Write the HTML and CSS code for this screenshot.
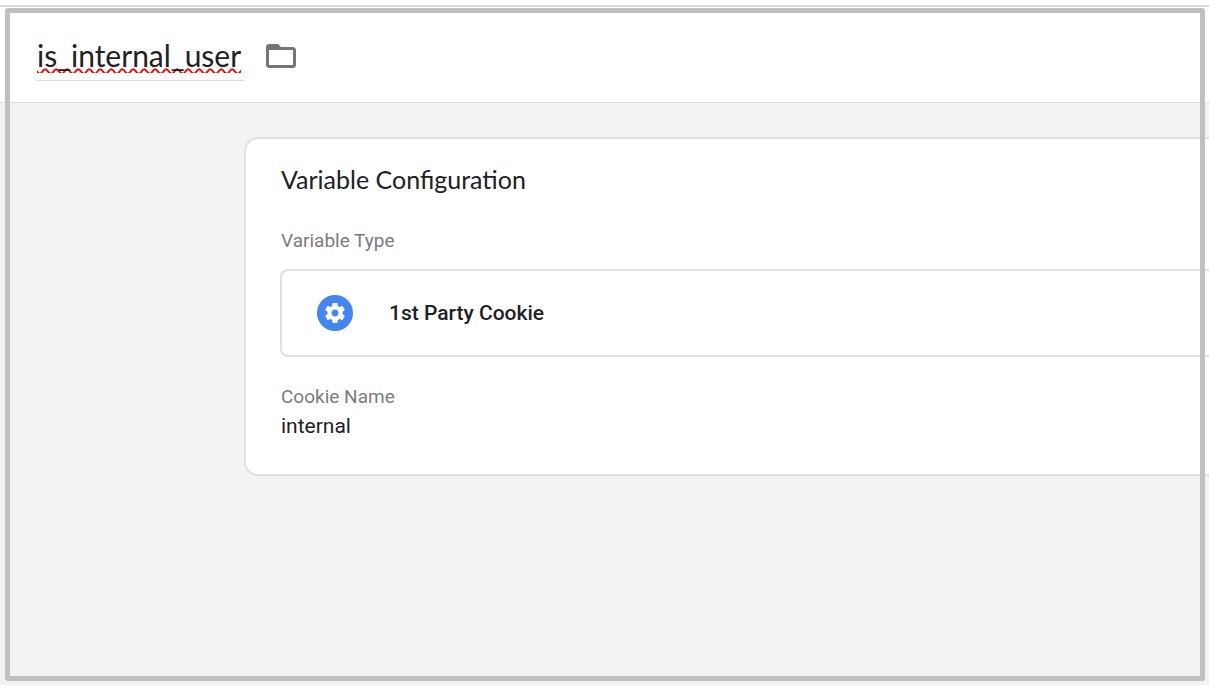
FILE: index.html
```html
<!doctype html>
<html lang="en">
    <head>
        <meta charset="utf-8">
        <title>is_internal_user</title>
        <link rel="stylesheet" href="styles.css">
    </head>
    <body>
        <header class="header">
            <input class="name" type="text" value="is_internal_user" aria-label="Variable name" spellcheck="false">
            <button class="folder-btn" type="button" aria-label="Move to folder">
                <svg viewBox="0 0 24 24" width="36" height="36">
                    <path fill="#757575" d="M20 6h-8l-2-2H4c-1.100 0-1.990.9-1.990 2L2 18c0 1.100.9 2 2 2h16c1.100 0 2-.9 2-2V8c0-1.100-.9-2-2-2zm0 12H4V8h16v10z"/>
                </svg>
            </button>
        </header>
        <main class="content">
            <section class="card">
                <h2>Variable Configuration</h2>
                <h3 class="label">Variable Type</h3>
                <button class="type" type="button">
                    <span class="type-icon">
                        <svg viewBox="0 0 24 24" width="24" height="24">
                            <path fill="#fff" d="M19.430 12.980c.04-.32.07-.64.07-.98s-.03-.66-.07-.98l2.110-1.650c.19-.15.24-.42.12-.64l-2-3.460c-.12-.22-.39-.3-.61-.22l-2.490 1c-.52-.4-1.080-.73-1.690-.98l-.38-2.650C14.460 2.180 14.250 2 14 2h-4c-.25 0-.46.18-.49.42l-.38 2.650c-.61.25-1.170.59-1.690.98l-2.490-1c-.23-.09-.49 0-.61.22l-2 3.460c-.13.22-.07.49.12.64l2.110 1.650c-.04.32-.07.65-.07.98s.03.66.07.98l-2.110 1.650c-.19.15-.24.42-.12.64l2 3.460c.12.22.39.3.61.22l2.490-1c.52.4 1.080.73 1.690.98l.38 2.650c.03.24.24.42.49.42h4c.25 0 .46-.18.49-.42l.38-2.650c.61-.25 1.170-.59 1.690-.98l2.490 1c.23.09.49 0 .61-.22l2-3.460c.12-.22.07-.49-.12-.64l-2.110-1.650zM12 15.500c-1.930 0-3.500-1.570-3.500-3.500s1.570-3.500 3.500-3.500 3.500 1.570 3.500 3.500-1.570 3.500-3.500 3.500z"/>
                        </svg>
                    </span>
                    <span>1st Party Cookie</span>
                </button>
                <h3 class="label">Cookie Name</h3>
                <p class="value">internal</p>
            </section>
        </main>
        <div class="frame"></div>
    </body>
</html>
```

FILE: styles.css
```css
* {
    box-sizing: border-box;
}
html {
    height: 100%;
    background: #fff;
}
body {
    display: flex;
    flex-direction: column;
    min-height: 100%;
    margin: 0;
    padding-top: 5px;
    color: #202124;
    font-family: Roboto, "Liberation Sans", sans-serif;
    font-size: 21px;
}
h2, h3, p {
    margin: 0;
    font-weight: 400;
}
button {
    padding: 0;
    border: 0;
    background: none;
    color: inherit;
    font-family: inherit;
}

.header {
    display: flex;
    align-items: center;
    gap: 18px;
    height: 98px;
    padding: 2px 37px 0;
    border-top: 2px solid #dadada;
    border-bottom: 1px solid #dadce0;
}
.name {
    width: 208px;
    height: 50px;
    padding: 0;
    border: 0;
    border-bottom: 1px solid #dadce0;
    outline: 0;
    background: none;
    color: #202124;
    font-family: Lato, "Open Sans", sans-serif;
    font-size: 30px;
    text-decoration: underline wavy #f00 2px;
    text-decoration-skip-ink: none;
}
.folder-btn svg {
    display: block;
}

.content {
    flex: 1;
    padding: 34px 0 34px 244px;
    background: #f1f3f4;
}
/* card and type box run on past the right edge */
.card {
    padding: 24px 0 33px 34px;
    border: 2px solid #dfe1e4;
    border-right: 0;
    border-radius: 14px 0 0 14px;
    background: #fff;
}
.card h2 {
    margin-bottom: 32px;
    font-family: Lato, "Open Sans", sans-serif;
    font-size: 25px;
    line-height: 32px;
}
.card h2, .label, .value {
    padding-left: 1px;
}
.label {
    color: #7c7c7c;
    font-size: 19px;
    line-height: 28px;
}
.type {
    display: flex;
    align-items: center;
    gap: 36px;
    width: 100%;
    height: 88px;
    margin: 14px 0 26px;
    padding-left: 35px;
    border: 2px solid #dfe1e4;
    border-right: 0;
    border-radius: 8px 0 0 8px;
    font-size: 21px;
    font-weight: 500;
}
.type-icon {
    display: flex;
    align-items: center;
    justify-content: center;
    width: 36px;
    height: 36px;
    border-radius: 50%;
    background: #4285f4;
}
.value {
    line-height: 30px;
}

.frame {
    position: fixed;
    inset: 8px 4px 4px 5px;
    border: 5px solid #c0c0c0;
    border-radius: 3px;
    pointer-events: none;
}
```
